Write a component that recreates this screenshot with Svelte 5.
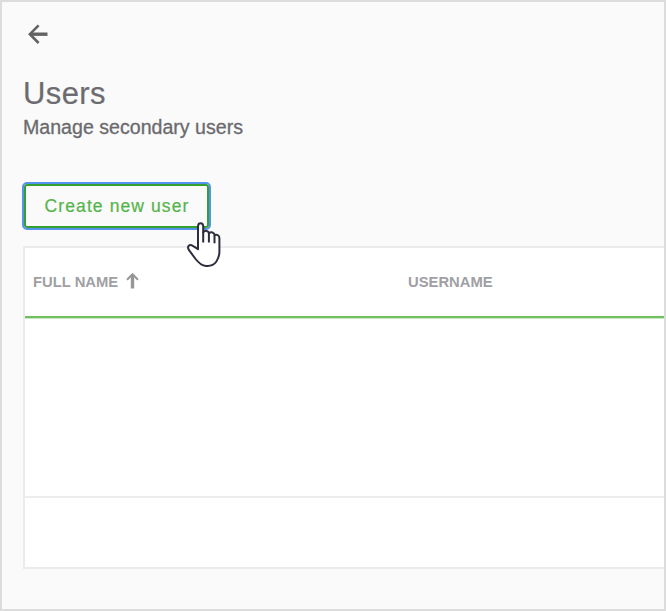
<script>
  const columns = [
    { label: 'FULL NAME', sorted: true },
    { label: 'USERNAME', sorted: false }
  ];
</script>

<main class="page">
  <button class="back" aria-label="Back">
    <svg width="22" height="22" viewBox="0 0 22 22" fill="none" stroke="#626262">
      <path d="M3.5 11.2H20.5" stroke-width="3.4" />
      <path d="M11.6 2.4L2.9 11.2L11.6 20" stroke-width="2.6" />
    </svg>
  </button>

  <header>
    <h1>Users</h1>
    <p>Manage secondary users</p>
  </header>

  <div class="action">
    <button class="create">Create new user</button>
    <svg class="cursor" width="36" height="48" viewBox="0 0 36 48">
      <path
        d="M12 28.2V5.6C12 1.2 17.2 1.2 17.2 5.6V11.2C19.4 9 22.4 9.6 23 12.2C25.2 10.6 28 11.4 28.6 14C31.2 13.2 33.4 14.4 33.4 17.2V31.2C33.4 35.6 31.8 38.2 30.2 40.8C27.6 44.6 23.2 45.4 18.8 44.8C14.6 44.2 12 41 9.6 38L3.2 29.4C.4 25.2 3.6 22.6 7.2 25.2Z"
        fill="#fff" stroke="#2d2d3d" stroke-width="2" stroke-linejoin="round" />
      <path d="M17.2 10.5V21.5M22.9 12V21.5M28.5 13.8V22.3" fill="none" stroke="#2d2d3d" stroke-width="2" />
    </svg>
  </div>

  <section class="table">
    <div class="head">
      {#each columns as column}
        <div class="cell">
          <span>{column.label}</span>
          {#if column.sorted}
            <svg width="13" height="17" viewBox="0 0 13 17" fill="none" stroke="#969696">
              <path d="M6.5 1.5V15.5" stroke-width="3.4" />
              <path d="M1 6.7L6.5 1.2L12 6.7" stroke-width="2" />
            </svg>
          {/if}
        </div>
      {/each}
    </div>
    <div class="body"></div>
    <div class="foot"></div>
  </section>
</main>

<style>
  :global(body) {
    margin: 0;
    background: #fff;
  }
  .page {
    box-sizing: border-box;
    width: 666px;
    height: 611px;
    border: 2px solid #dcdcdc;
    padding: 21px 0 0 21px;
    background: #fafafa;
    font-family: "Liberation Sans", Arial, sans-serif;
    overflow: hidden;
  }
  button {
    font-family: inherit;
  }
  .back {
    display: block;
    border: 0;
    padding: 0 0 0 4px;
    background: none;
    height: 22px;
  }
  .back svg {
    display: block;
  }
  header {
    padding-top: 31px;
  }
  h1 {
    margin: 0;
    font-size: 31px;
    font-weight: 400;
    line-height: 36px;
    letter-spacing: 0.4px;
    color: #6c6c70;
    -webkit-text-stroke: 0.2px #6c6c70;
  }
  p {
    margin: 3px 0 0;
    font-size: 19.6px;
    line-height: 24px;
    color: #6a6a6e;
    -webkit-text-stroke: 0.3px #6a6a6e;
  }
  .action {
    position: relative;
    margin: 43px 0 0 -1px;
    height: 48px;
  }
  .create {
    box-sizing: border-box;
    width: 189px;
    height: 48px;
    padding: 0 0 0 1px;
    border: 2px solid #5594ee;
    border-radius: 5px;
    box-shadow: inset 0 0 0 2px #36a02e;
    background: #fafafa;
    color: #55b449;
    font-size: 17.5px;
    letter-spacing: 1.1px;
    -webkit-text-stroke: 0.2px #55b449;
  }
  .cursor {
    position: absolute;
    left: 164px;
    top: 39px;
    z-index: 1;
  }
  .table {
    margin-top: 16px;
    border: 2px solid #ebebeb;
    border-right: 0;
    background: #fff;
  }
  .head {
    display: flex;
    height: 68px;
    border-bottom: 2px solid #70c05f;
    box-shadow: 0 1px #c9e9c3;
  }
  .cell {
    display: flex;
    align-items: center;
    box-sizing: border-box;
    width: 375px;
    flex: none;
    padding: 0 0 1px 8px;
    gap: 8px;
    font-size: 14.8px;
    font-weight: 700;
    color: #a0a0a4;
  }
  .body {
    height: 178px;
    border-bottom: 2px solid #ededed;
  }
  .foot {
    height: 69px;
  }
</style>
